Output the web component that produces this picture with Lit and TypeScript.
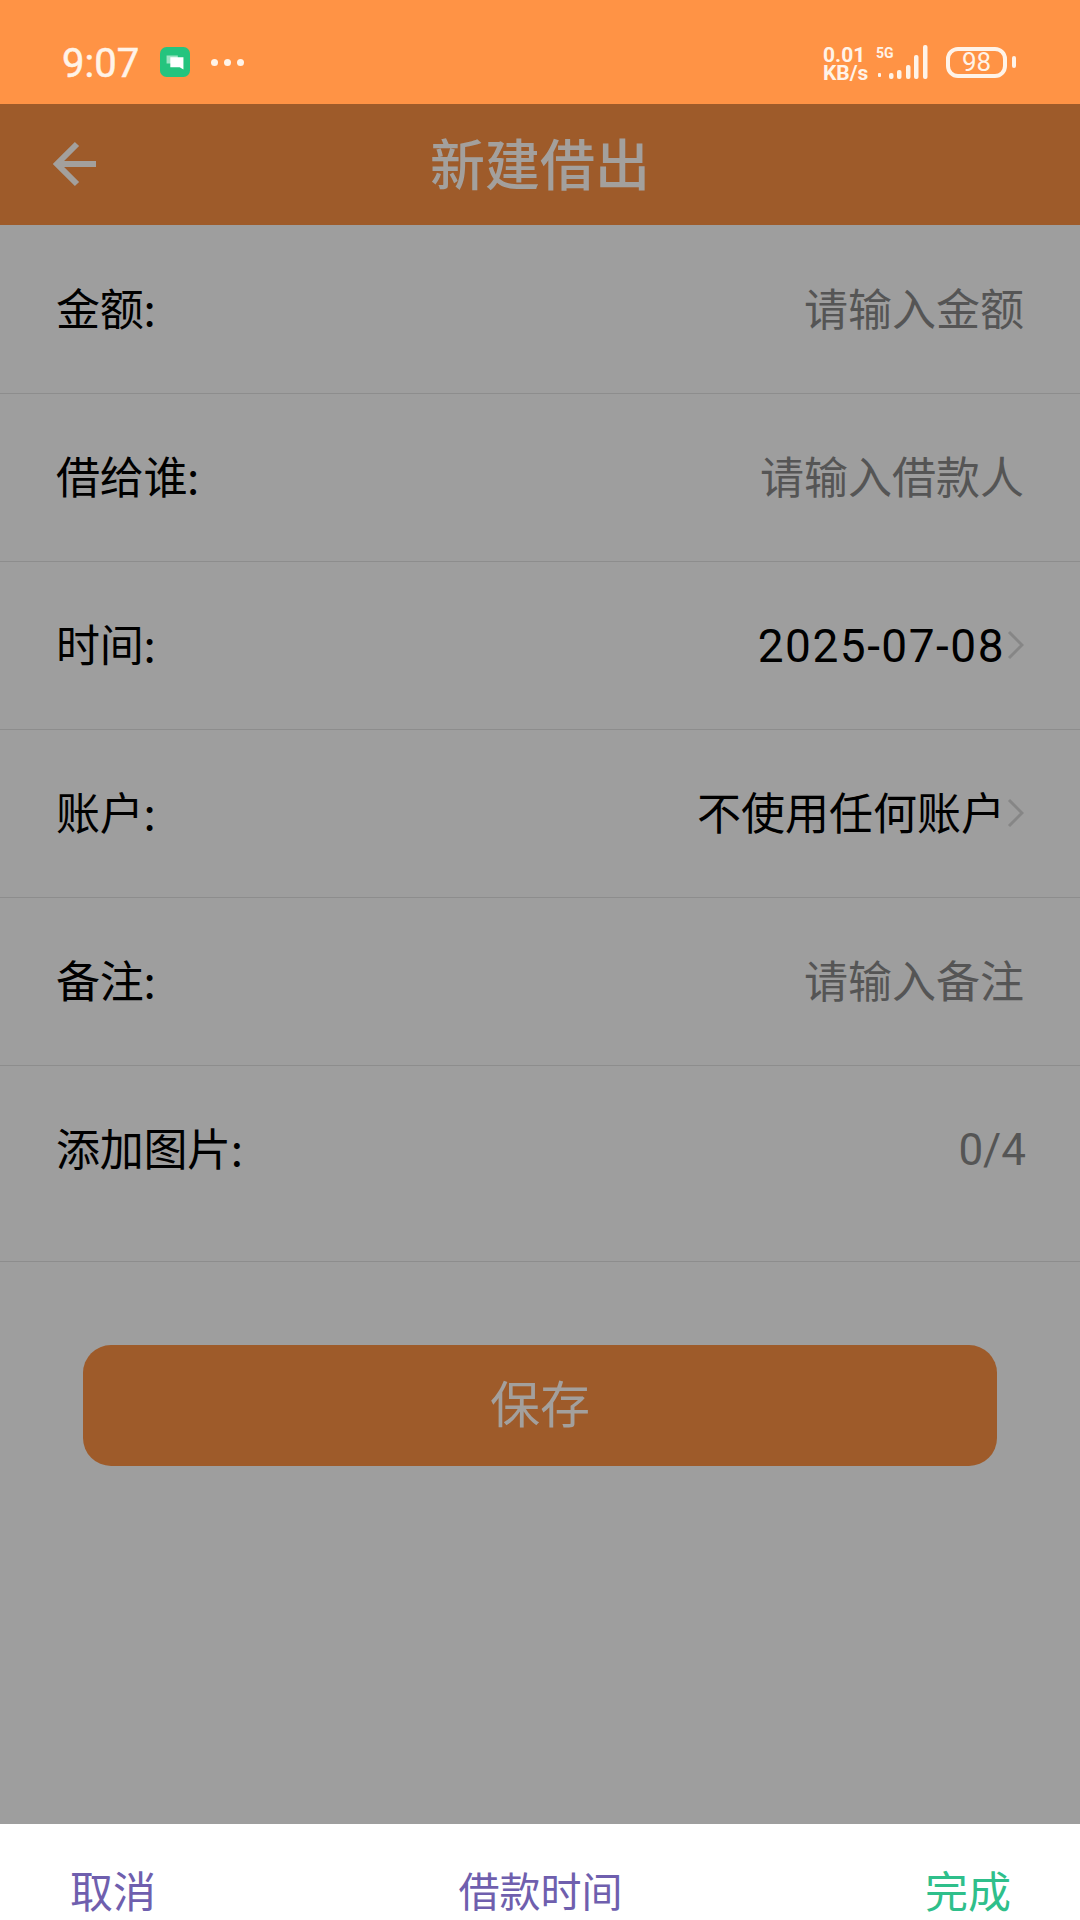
import { LitElement, html, css } from "lit";
import { customElement } from "lit/decorators.js";

const chevron = html`<svg class="chev" viewBox="0 0 17 30" width="17" height="30"><path d="M2 2 L15 15 L2 28" fill="none" stroke="#868686" stroke-width="3"/></svg>`;

@customElement("app-root")
export class AppRoot extends LitElement {
  static styles = css`
    :host { display: flex; flex-direction: column; width: 1080px; height: 1920px; overflow: hidden; background: #9e9e9e;
      font-family: "Noto Sans CJK SC", "Noto Sans", sans-serif; color: #000; }
    .status { height: 104px; flex: none; background: #ff9345; display: flex; align-items: center; padding: 20px 64px 0 62px; color: #fff3e8; box-sizing: border-box; }
    .time { font-family: Roboto, sans-serif; font-weight: 400; font-size: 40px; line-height: 44px; width: 98px; margin-top: 4px; -webkit-text-stroke: 0.5px #fff3e8; }
    .app { margin-right: 21px; }
    .dots { display: flex; gap: 6px; }
    .dots i { width: 7px; height: 7px; border-radius: 50%; background: #fff3e8; display: block; }
    .right { margin-left: auto; display: flex; align-items: center; }
    .speed { font-family: Roboto, sans-serif; font-weight: 700; font-size: 21px; line-height: 18px; width: 53px; white-space: nowrap; margin-top: 3px; }
    .sig { position: relative; width: 54px; height: 44px; margin-right: 16px; }
    .sig svg { display: block; }
    .g5 { position: absolute; left: 0; top: 6px; font: 700 14px/14px Roboto, sans-serif; }
    .bat { width: 61px; height: 31px; border: 4px solid #fff3e8; border-radius: 12px; box-sizing: border-box; display: flex; align-items: center; justify-content: center;
      font-family: Roboto, sans-serif; font-size: 26px; }
    .nub { width: 4px; height: 12px; background: #fff3e8; border-radius: 2px; margin-left: 5px; }
    .head { height: 121px; flex: none; background: #9e5b2a; display: flex; align-items: center; justify-content: center; position: relative; }
    .back { position: absolute; left: 53px; top: 37px; }
    .title { font-size: 55px; line-height: 64px; color: #a3a09d; font-weight: 500; margin-top: -7px; }
    .main { flex: 1; display: flex; flex-direction: column; padding-top: 1px; }
    .row { height: 168px; box-sizing: border-box; border-bottom: 1px solid #8d8d8d; display: flex; align-items: center; justify-content: space-between; padding: 0 56px 5px 56px; font-size: 44px; }
    .row.tall { height: 196px; padding-bottom: 33px; }
    .lab { letter-spacing: -0.300px; }
    .ph { color: #555; }
    .num { font-family: Roboto, sans-serif; font-size: 44px; margin-right: -2px; margin-top: 6px; color: #555; }
    .val { display: flex; align-items: center; gap: 2px; }
    .date { font-family: Roboto, sans-serif; font-size: 46px; letter-spacing: 1.500px; margin-top: 6px; }
    .chev { margin-top: 3px; }
    .btn { margin: 83px 83px 0; height: 121px; box-sizing: border-box; padding-bottom: 9px; border-radius: 28px; background: #9e5b2a; color: #a3a09d; font-size: 50px; display: flex; align-items: center; justify-content: center; }
    .sheet { height: 96px; flex: none; background: #fff; display: flex; align-items: flex-end; justify-content: space-between; padding: 0 69px 6px 70px; font-size: 43px; line-height: 50px; color: #6f5fae; box-sizing: border-box; }
    .mid { font-size: 41px; }
    .done { color: #2fbf8b; }
  `;

  private row(label: string, value: unknown, tall = false) {
    return html`<div class="row ${tall ? "tall" : ""}"><span class="lab">${label}</span>${value}</div>`;
  }

  render() {
    return html`
      <div class="status">
        <span class="time">9:07</span>
        <svg class="app" width="30" height="30" viewBox="0 0 32 32">
          <rect width="32" height="32" rx="7" fill="#24c47e"/>
          <path d="M7 9h12v10l-4-1.500H7z" fill="#9de4c4"/>
          <path d="M11 11h14v13l-4-2.500H11z" fill="#fff"/>
        </svg>
        <span class="dots"><i></i><i></i><i></i></span>
        <div class="right">
          <div class="speed">0.01<br />KB/s</div>
          <div class="sig">
            <svg width="54" height="44" viewBox="0 0 54 44">
              <rect x="2" y="33" width="3" height="4" rx="1" fill="#fff3e8"/>
              <rect x="13" y="33" width="4.500" height="6" rx="2" fill="#fff3e8"/>
              <rect x="21" y="30" width="4.500" height="9" rx="2" fill="#fff3e8"/>
              <rect x="30" y="25" width="4.500" height="14" rx="2" fill="#fff3e8"/>
              <rect x="38" y="15" width="4.500" height="24" rx="2" fill="#fff3e8"/>
              <rect x="47" y="5" width="4.500" height="34" rx="2" fill="#fff3e8"/>
            </svg>
            <span class="g5">5G</span>
          </div>
          <div class="bat">98</div>
          <div class="nub"></div>
        </div>
      </div>
      <div class="head">
        <svg class="back" width="46" height="46" viewBox="0 0 46 46">
          <path d="M43 23H4M24 3L4 23L24 43" fill="none" stroke="#a3a09d" stroke-width="6"/>
        </svg>
        <span class="title">新建借出</span>
      </div>
      <div class="main">
        ${this.row("金额:", html`<span class="ph">请输入金额</span>`)}
        ${this.row("借给谁:", html`<span class="ph">请输入借款人</span>`)}
        ${this.row("时间:", html`<span class="val"><span class="date">2025-07-08</span>${chevron}</span>`)}
        ${this.row("账户:", html`<span class="val"><span>不使用任何账户</span>${chevron}</span>`)}
        ${this.row("备注:", html`<span class="ph">请输入备注</span>`)}
        ${this.row("添加图片:", html`<span class="num">0/4</span>`, true)}
        <div class="btn">保存</div>
      </div>
      <div class="sheet">
        <span>取消</span>
        <span class="mid">借款时间</span>
        <span class="done">完成</span>
      </div>
    `;
  }
}
